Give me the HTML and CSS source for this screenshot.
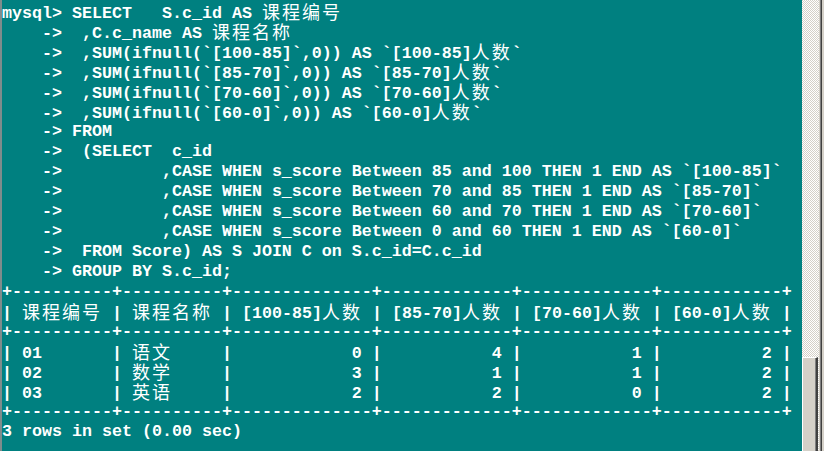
FILE: index.html
```html
<!DOCTYPE html>
<html lang="zh">
<head>
<meta charset="utf-8">
<title>mysql</title>
<link rel="stylesheet" href="styles.css">
</head>
<body>
<div class="window">
  <div class="screen">
    <div class="lines">
      <div class="line">mysql&gt; SELECT   S.c_id AS <span class="cjk">课程编号</span></div>
      <div class="line">    -&gt;  ,C.c_name AS <span class="cjk">课程名称</span></div>
      <div class="line">    -&gt;  ,SUM(ifnull(`[100-85]`,0)) AS `[100-85]<span class="cjk">人数</span>`</div>
      <div class="line">    -&gt;  ,SUM(ifnull(`[85-70]`,0)) AS `[85-70]<span class="cjk">人数</span>`</div>
      <div class="line">    -&gt;  ,SUM(ifnull(`[70-60]`,0)) AS `[70-60]<span class="cjk">人数</span>`</div>
      <div class="line">    -&gt;  ,SUM(ifnull(`[60-0]`,0)) AS `[60-0]<span class="cjk">人数</span>`</div>
      <div class="line">    -&gt; FROM</div>
      <div class="line">    -&gt;  (SELECT  c_id</div>
      <div class="line">    -&gt;          ,CASE WHEN s_score Between 85 and 100 THEN 1 END AS `[100-85]`</div>
      <div class="line">    -&gt;          ,CASE WHEN s_score Between 70 and 85 THEN 1 END AS `[85-70]`</div>
      <div class="line">    -&gt;          ,CASE WHEN s_score Between 60 and 70 THEN 1 END AS `[70-60]`</div>
      <div class="line">    -&gt;          ,CASE WHEN s_score Between 0 and 60 THEN 1 END AS `[60-0]`</div>
      <div class="line">    -&gt;  FROM Score) AS S JOIN C on S.c_id=C.c_id</div>
      <div class="line">    -&gt; GROUP BY S.c_id;</div>
      <div class="line">+----------+----------+--------------+-------------+-------------+------------+</div>
      <div class="line">| <span class="cjk">课程编号</span> | <span class="cjk">课程名称</span> | [100-85]<span class="cjk">人数</span> | [85-70]<span class="cjk">人数</span> | [70-60]<span class="cjk">人数</span> | [60-0]<span class="cjk">人数</span> |</div>
      <div class="line">+----------+----------+--------------+-------------+-------------+------------+</div>
      <div class="line">| 01       | <span class="cjk">语文</span>     |            0 |           4 |           1 |          2 |</div>
      <div class="line">| 02       | <span class="cjk">数学</span>     |            3 |           1 |           1 |          2 |</div>
      <div class="line">| 03       | <span class="cjk">英语</span>     |            2 |           2 |           0 |          2 |</div>
      <div class="line">+----------+----------+--------------+-------------+-------------+------------+</div>
      <div class="line">3 rows in set (0.00 sec)</div>
      <div class="line"></div>
    </div>
  </div>
  <div class="scrollbar">
    <div class="track">
      <div class="track-space"></div>
      <div class="thumb"></div>
    </div>
    <div class="frame"></div>
  </div>
</div>
</body>
</html>
```

FILE: styles.css
```css
html, body {
  margin: 0;
  padding: 0;
  width: 824px;
  height: 451px;
  overflow: hidden;
  background: #008080;
}

.window {
  display: flex;
  width: 824px;
  height: 451px;
}

.screen {
  flex: 1;
  background: #008080;
  border-left: 2px solid #7f8c8c;
  overflow: hidden;
}

.lines {
  margin-top: 2px;
  color: #ffffff;
  font-family: "Liberation Mono", monospace;
  font-weight: bold;
  font-size: 16.667px;
}

.line {
  height: 20px;
  line-height: 20px;
  white-space: pre;
}

.cjk {
  font-family: "Noto Sans CJK SC", sans-serif;
  font-weight: normal;
  font-size: 18px;
  letter-spacing: 2px;
  line-height: 18px;
  vertical-align: -1px;
}

.scrollbar {
  width: 22px;
  display: flex;
}

.track {
  width: 17px;
  display: flex;
  flex-direction: column;
  background: repeating-conic-gradient(#ffffff 0 25%, #d4d0c8 0 50%) 0 0 / 2px 2px;
}

.track-space {
  flex: 1;
}

.thumb {
  height: 93px;
  width: 13px;
  background: #d4d0c8;
  border-left: 1px solid #ffffff;
  border-top: 1px solid #ffffff;
  border-right: 2px solid #404040;
  box-shadow: inset -1px 0 0 #808080;
}

.frame {
  flex: 1;
  background: linear-gradient(to right, #d4d0c8 0 1px, #808080 1px 2px, #404040 2px 3px, #d4d0c8 3px 5px);
}
```
